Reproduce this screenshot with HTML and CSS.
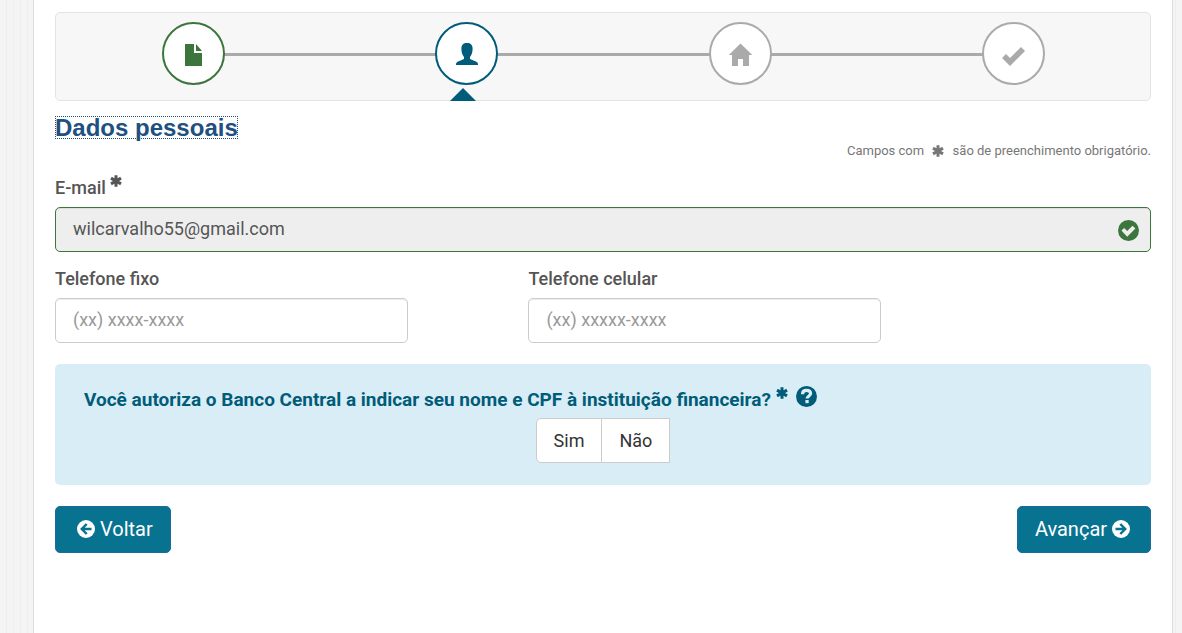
FILE: index.html
```html
<!DOCTYPE html>
<html lang="pt-BR">
<head>
  <meta charset="UTF-8">
  <meta name="viewport" content="width=device-width, initial-scale=1.0">
  <title>Dados pessoais</title>
  <link rel="stylesheet" href="styles.css">
</head>
<body>
  <!-- shared icons -->
  <svg class="sprite" aria-hidden="true">
    <symbol id="asterisk" viewBox="0 0 12 12">
      <path d="M6 0.3V11.7M1 3.1L11 8.9M11 3.1L1 8.9" fill="none" stroke="currentColor" stroke-width="3"/>
    </symbol>
  </svg>

  <main class="container">
    <ol class="steps">
      <li class="step done">
        <span class="step-icon">
          <svg width="24" height="24" viewBox="0 0 24 24"><path d="M3 1h9v9h8v13H3zM14 1l6 7h-6z"/></svg>
        </span>
      </li>
      <li class="step active">
        <span class="step-icon">
          <svg width="24" height="24" viewBox="0 0 24 24"><path d="M12 0c-3.700 0-5.600 2-5.600 5.500 0 3.300.8 6.700 2.600 8.400v2L2.600 18.700Q1 19.500 1 21v1h22v-1q0-1.500-1.600-2.300L15 15.900v-2c1.800-1.700 2.600-5.100 2.600-8.400C17.600 2 15.700 0 12 0z"/></svg>
        </span>
      </li>
      <li class="step">
        <span class="step-icon">
          <svg width="24" height="24" viewBox="0 0 24 24"><path d="M12.500 0.500L24.200 12H21v11h-6v-7h-5v7H4V12H0.800z"/></svg>
        </span>
      </li>
      <li class="step">
        <span class="step-icon">
          <svg width="24" height="24" viewBox="0 0 24 24"><path d="M1 15l4-4 4 4L20 4l4 4L9 23z"/></svg>
        </span>
      </li>
    </ol>

    <h1 class="title"><span class="title-text">Dados pessoais</span></h1>
    <p class="note">Campos com <svg class="asterisk"><use href="#asterisk"/></svg> são de preenchimento obrigatório.</p>

    <form>
      <div class="form-group">
        <label for="email">E-mail <svg class="asterisk raised"><use href="#asterisk"/></svg></label>
        <div class="valid">
          <input type="email" id="email" name="email" class="form-control" value="wilcarvalho55@gmail.com" readonly>
          <svg class="valid-icon" width="21" height="21" viewBox="0 0 21 21"><circle cx="10.500" cy="10.500" r="10.500"/><path d="M3.500 10.500l2.600-2.600 3.100 3.100 5.300-5.300 2.900 2.900-8.200 8.100z" fill="#eee"/></svg>
        </div>
      </div>

      <div class="phones">
        <div class="form-group">
          <label for="fixo">Telefone fixo</label>
          <input type="tel" id="fixo" name="fixo" class="form-control" placeholder="(xx) xxxx-xxxx">
        </div>
        <div class="form-group">
          <label for="celular">Telefone celular</label>
          <input type="tel" id="celular" name="celular" class="form-control" placeholder="(xx) xxxxx-xxxx">
        </div>
      </div>

      <div class="consent" role="group" aria-labelledby="question">
        <p class="question">
          <span id="question">Você autoriza o Banco Central a indicar seu nome e CPF à instituição financeira?</span>
          <svg class="asterisk raised"><use href="#asterisk"/></svg>
          <svg class="help" width="21" height="21" viewBox="0 0 21 21"><circle cx="10.500" cy="10.500" r="10.500" fill="currentColor"/><path d="M6.500 8.200C6.500 5.200 8.300 4.400 10.600 4.400s4 1.100 4 3.200c0 2.300-3.500 2.400-3.500 5" fill="none" stroke="#d9edf6" stroke-width="3.200"/><path d="M9.400 14h3.300v3.200h-3.300z" fill="#d9edf6"/></svg>
        </p>
        <div class="options">
          <button type="button" class="option">Sim</button>
          <button type="button" class="option">Não</button>
        </div>
      </div>

      <div class="actions">
        <button type="button" class="btn">
          <svg class="icon-left" width="18" height="18" viewBox="0 0 18 18"><circle cx="9" cy="9" r="9" fill="#fff"/><path d="M9.700 4L4.800 9l4.900 5M5 9h9.500" fill="none" stroke="#077391" stroke-width="2.500"/></svg>
          Voltar
        </button>
        <button type="submit" class="btn">
          Avançar
          <svg class="icon-right" width="18" height="18" viewBox="0 0 18 18"><circle cx="9" cy="9" r="9" fill="#fff"/><path d="M8.300 4l4.900 5-4.900 5M13 9H3.500" fill="none" stroke="#077391" stroke-width="2.500"/></svg>
        </button>
      </div>
    </form>
  </main>
</body>
</html>
```

FILE: styles.css
```css
* {
  box-sizing: border-box;
}
body {
  margin: 0;
  font-family: Roboto, sans-serif;
  font-size: 18px;
  line-height: 26px;
  color: #555;
  background: #f4f4f4 repeating-linear-gradient(90deg, transparent 0, transparent 6px, #eee 6px, #eee 7px);
}
.sprite {
  display: none;
}
.container {
  min-height: 100vh;
  margin: 0 9px 0 33px;
  padding: 12px 21px;
  background-color: #fff;
  border: solid #ddd;
  border-width: 0 1px;
}

/* steps */
.steps {
  display: flex;
  height: 89px;
  margin: 0;
  padding: 9px 0 0 1px;
  list-style: none;
  background-color: #f7f7f7;
  border: 1px solid #e3e3e3;
  border-radius: 5px;
}
.step {
  position: relative;
  flex: 1;
  display: flex;
  justify-content: center;
  color: #aaa;
}
.step + .step::before {
  content: "";
  position: absolute;
  top: 31px;
  left: -50%;
  width: 100%;
  height: 3px;
  background-color: #aaa;
}
.step-icon {
  position: relative;
  z-index: 1;
  display: flex;
  align-items: center;
  justify-content: center;
  width: 63px;
  height: 63px;
  padding-top: 3px;
  background-color: #fff;
  border: 2px solid;
  border-radius: 50%;
}
.step-icon svg {
  fill: currentColor;
}
.done {
  color: #3c763d;
}
.active {
  color: #005c78;
}
.active::after {
  content: "";
  position: absolute;
  bottom: -1px;
  left: calc(50% - 17px);
  border: 13px solid transparent;
  border-top: 0;
  border-bottom-color: #005c78;
}

/* heading */
.title {
  margin: 15px 0 3px;
  font-family: "Liberation Sans", Arial, sans-serif;
  font-size: 24px;
  line-height: 23px;
  color: #205081;
}
.title-text {
  display: inline-block;
  outline: 1px dotted #205081;
  outline-offset: -1px;
}
.note {
  margin: 0 0 15px;
  font-size: 13px;
  line-height: 18px;
  color: #777;
  text-align: right;
}
.asterisk {
  width: 12px;
  height: 12px;
  margin: 0 5px;
  vertical-align: -2px;
}
.raised {
  margin: 0;
  vertical-align: 7px;
}

/* form */
.form-group {
  margin-bottom: 14px;
}
.form-group label {
  display: block;
  height: 26px;
  margin-bottom: 6px;
  font-weight: 500;
}
.form-control {
  display: block;
  width: 100%;
  height: 45px;
  padding: 0 17px 2px;
  font: inherit;
  color: #555;
  background-color: #fff;
  border: 1px solid #ccc;
  border-radius: 5px;
  box-shadow: inset 0 1px 1px rgba(0, 0, 0, 0.075);
}
.form-control::placeholder {
  color: #999;
}
.valid {
  position: relative;
}
.valid .form-control {
  background-color: #eee;
  border-color: #3c763d;
}
.valid-icon {
  position: absolute;
  top: 13px;
  right: 12px;
  fill: #3c763d;
}
.phones {
  display: grid;
  grid-template-columns: 32.2% 32.2%;
  column-gap: 11%;
}

/* consent */
.consent {
  margin-top: 7px;
  padding: 22px 29px;
  color: #005c78;
  background-color: #d9edf6;
  border-radius: 5px;
}
.question {
  height: 26px;
  margin: 0 0 6px;
  font-size: 19px;
  font-weight: 700;
}
.help {
  margin-left: 4px;
  vertical-align: -1px;
}
.options {
  display: flex;
  justify-content: center;
}
.option {
  height: 45px;
  padding: 0 17px;
  font: inherit;
  color: #333;
  background-color: #fff;
  border: 1px solid #ccc;
  cursor: pointer;
}
.option:first-child {
  border-radius: 5px 0 0 5px;
}
.option + .option {
  margin-left: -1px;
}

/* actions */
.actions {
  display: flex;
  justify-content: space-between;
  margin-top: 21px;
}
.btn {
  height: 47px;
  padding: 0 17px 2px;
  font: inherit;
  font-size: 20px;
  color: #fff;
  background-color: #077391;
  border: 1px solid #1b6c9c;
  border-radius: 5px;
  cursor: pointer;
}
.icon-left,
.icon-right {
  vertical-align: -2px;
}
.icon-left {
  margin-left: 4px;
}
.icon-right {
  margin-right: 3px;
}
```
